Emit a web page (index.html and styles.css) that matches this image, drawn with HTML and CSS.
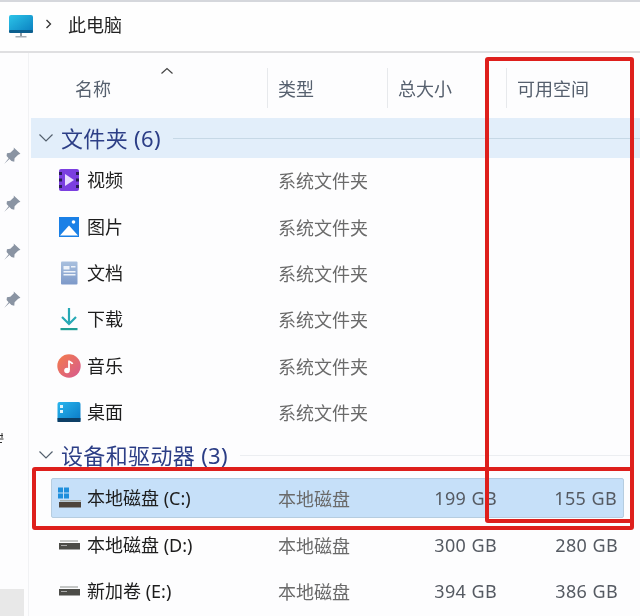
FILE: index.html
```html
<!DOCTYPE html>
<html lang="zh-CN">
<head>
<meta charset="utf-8">
<title>此电脑</title>
<link rel="stylesheet" href="styles.css">
</head>
<body>
<div class="window">
  <header class="crumbs">
    <svg class="pc-icon" width="26" height="24" viewBox="0 0 26 24"><defs><linearGradient id="pc" x1="0" y1="0" x2="1" y2="1"><stop offset="0" stop-color="#2cc4e8"/><stop offset="1" stop-color="#0a7fc0"/></linearGradient></defs><rect x="1" y="1" width="24" height="17" rx="2" fill="url(#pc)"/><rect x="1" y="16" width="24" height="3" rx="1" fill="#0c5f8e"/><rect x="12" y="19" width="2" height="4" fill="#8f9aa3"/><rect x="7.500" y="22" width="11" height="1.500" fill="#a5aeb5"/></svg>
    <svg class="sep" width="8" height="10" viewBox="0 0 8 10"><path d="M1.500 1l4 4-4 4" fill="none" stroke="#333" stroke-width="1.300"/></svg>
    <span class="crumb-text">此电脑</span>
  </header>
  <div class="body">
    <aside class="pins">
      <svg class="pin" width="18" height="18" viewBox="0 0 16 16"><path d="M9.500 0.500l6 5.500-2 .8-3.200 3.200-.3 3-2.500-.5-1.800-1.800-4.700 4.300 4-5-1.800-2 .3-2.500 3-.3 3.200-3.200z" fill="#8a94a3"/></svg>
      <svg class="pin" width="18" height="18" viewBox="0 0 16 16"><path d="M9.500 0.500l6 5.500-2 .8-3.200 3.200-.3 3-2.500-.5-1.800-1.800-4.700 4.300 4-5-1.800-2 .3-2.500 3-.3 3.200-3.200z" fill="#8a94a3"/></svg>
      <svg class="pin" width="18" height="18" viewBox="0 0 16 16"><path d="M9.500 0.500l6 5.500-2 .8-3.200 3.200-.3 3-2.500-.5-1.800-1.800-4.700 4.300 4-5-1.800-2 .3-2.500 3-.3 3.200-3.200z" fill="#8a94a3"/></svg>
      <svg class="pin" width="18" height="18" viewBox="0 0 16 16"><path d="M9.500 0.500l6 5.500-2 .8-3.200 3.200-.3 3-2.500-.5-1.800-1.800-4.700 4.300 4-5-1.800-2 .3-2.500 3-.3 3.200-3.200z" fill="#8a94a3"/></svg>
      <svg class="edge-mark" width="4" height="12" viewBox="0 0 4 12"><path d="M0 2.500h3M0 6h3.500M0 9.500h2M2 0v5" fill="none" stroke="#333" stroke-width="1"/></svg>
      <div class="nav-selected"></div>
    </aside>
    <main class="list">
      <div class="columns">
        <div class="col col-name">名称<svg class="sort" width="14" height="8" viewBox="0 0 14 8"><path d="M1.500 6.500L7 1.500l5.500 5" fill="none" stroke="#444" stroke-width="1.200"/></svg></div>
        <div class="col col-div">类型</div>
        <div class="col col-div">总大小</div>
        <div class="col col-div">可用空间</div>
      </div>

      <div class="group group-active">
        <svg width="16" height="10" viewBox="0 0 16 10"><path d="M1.500 1.500L8 8l6.500-6.500" fill="none" stroke="#54606e" stroke-width="1.200"/></svg>
        <span class="group-title">文件夹 (6)</span><span class="group-line"></span>
      </div>

      <div class="row">
        <div class="name"><svg class="ico" width="22" height="24" viewBox="0 0 22 24"><rect x="1" y="1" width="20" height="22" rx="2" fill="#7b3fe0"/><rect x="1" y="4" width="3" height="3" fill="#2a1b57"/><rect x="1" y="10.500" width="3" height="3" fill="#2a1b57"/><rect x="1" y="17" width="3" height="3" fill="#2a1b57"/><rect x="18" y="4" width="3" height="3" fill="#2a1b57"/><rect x="18" y="10.500" width="3" height="3" fill="#2a1b57"/><rect x="18" y="17" width="3" height="3" fill="#2a1b57"/><path d="M7 6l9 6-9 6z" fill="#e9dcff"/></svg><span>视频</span></div>
        <div class="type">系统文件夹</div><div></div><div></div>
      </div>
      <div class="row">
        <div class="name"><svg class="ico" width="22" height="22" viewBox="0 0 22 22"><rect x="1" y="1" width="20" height="20" fill="#1a80e6"/><path d="M2 19.500L11 9.500l9 10z" fill="#fff"/><circle cx="15.500" cy="6" r="1.800" fill="#fff"/></svg><span>图片</span></div>
        <div class="type">系统文件夹</div><div></div><div></div>
      </div>
      <div class="row">
        <div class="name"><svg class="ico" width="22" height="24" viewBox="0 0 22 24"><defs><linearGradient id="doc" x1="0" y1="0" x2="0" y2="1"><stop offset="0" stop-color="#a9c0de"/><stop offset="1" stop-color="#7d99c9"/></linearGradient></defs><rect x="3" y="0.500" width="16.500" height="23" rx="1" fill="url(#doc)"/><rect x="5.500" y="5" width="6" height="3.500" fill="#eef3fa"/><rect x="13" y="5" width="4.500" height="1.500" fill="#eef3fa"/><rect x="5.500" y="10" width="12" height="1.500" fill="#eef3fa"/><rect x="5.500" y="13" width="12" height="1.500" fill="#eef3fa"/></svg><span>文档</span></div>
        <div class="type">系统文件夹</div><div></div><div></div>
      </div>
      <div class="row">
        <div class="name"><svg class="ico" width="22" height="24" viewBox="0 0 22 24"><path d="M11 1v15M4 10l7 7 7-7" fill="none" stroke="#27a9b5" stroke-width="2.200"/><rect x="2.500" y="21" width="17" height="2.200" fill="#1f9e94"/></svg><span>下载</span></div>
        <div class="type">系统文件夹</div><div></div><div></div>
      </div>
      <div class="row">
        <div class="name"><svg class="ico" width="24" height="24" viewBox="0 0 24 24"><defs><linearGradient id="mus" x1="0" y1="0" x2="1" y2="1"><stop offset="0" stop-color="#f47c4a"/><stop offset="1" stop-color="#d65a90"/></linearGradient></defs><circle cx="12" cy="12" r="11.700" fill="url(#mus)"/><circle cx="10" cy="16.500" r="2.800" fill="#fff"/><path d="M12 16V6.500c0 1.500 3 2 3.500 3.500" fill="none" stroke="#fff" stroke-width="1.800"/></svg><span>音乐</span></div>
        <div class="type">系统文件夹</div><div></div><div></div>
      </div>
      <div class="row">
        <div class="name"><svg class="ico" width="24" height="22" viewBox="0 0 24 22"><defs><linearGradient id="desk" x1="0" y1="0" x2="1" y2="1"><stop offset="0" stop-color="#29b6ee"/><stop offset="1" stop-color="#0a78c4"/></linearGradient></defs><rect x="0.500" y="1" width="23" height="20" rx="2" fill="url(#desk)"/><rect x="0.500" y="17" width="23" height="4" fill="#0d3f66"/><rect x="3" y="4" width="3" height="3" fill="#dff4fd"/><rect x="3" y="9" width="3" height="3" fill="#dff4fd"/></svg><span>桌面</span></div>
        <div class="type">系统文件夹</div><div></div><div></div>
      </div>

      <div class="group">
        <svg width="16" height="10" viewBox="0 0 16 10"><path d="M1.500 1.500L8 8l6.500-6.500" fill="none" stroke="#54606e" stroke-width="1.200"/></svg>
        <span class="group-title">设备和驱动器 (3)</span><span class="group-line"></span>
      </div>

      <div class="row row-selected">
        <div class="name"><svg class="ico" width="24" height="22" viewBox="0 0 24 22"><rect x="1" y="0.500" width="5" height="5" fill="#1f8fdc"/><rect x="7" y="0.500" width="5" height="5" fill="#1f8fdc"/><rect x="1" y="6.500" width="5" height="5" fill="#1f8fdc"/><rect x="7" y="6.500" width="5" height="5" fill="#1f8fdc"/><rect x="3" y="13" width="21" height="1.500" fill="#a9b0ae"/><rect x="2" y="15" width="22" height="5.500" fill="#4e443b"/></svg><span>本地磁盘 (C:)</span></div>
        <div class="type">本地磁盘</div><div class="num">199 GB</div><div class="num">155 GB</div>
      </div>
      <div class="row">
        <div class="name"><svg class="ico" width="24" height="12" viewBox="0 0 24 12"><rect x="3" y="1" width="18" height="2" fill="#c5c7c6"/><rect x="2" y="4" width="21" height="6.500" fill="#4c4c48"/><rect x="4" y="6" width="6" height="1" fill="#aaa"/></svg><span>本地磁盘 (D:)</span></div>
        <div class="type">本地磁盘</div><div class="num">300 GB</div><div class="num">280 GB</div>
      </div>
      <div class="row">
        <div class="name"><svg class="ico" width="24" height="12" viewBox="0 0 24 12"><rect x="3" y="1" width="18" height="2" fill="#c5c7c6"/><rect x="2" y="4" width="21" height="6.500" fill="#4c4c48"/><rect x="4" y="6" width="6" height="1" fill="#aaa"/></svg><span>新加卷 (E:)</span></div>
        <div class="type">本地磁盘</div><div class="num">394 GB</div><div class="num">386 GB</div>
      </div>
    </main>
  </div>
  <div class="mark mark-col"></div>
  <div class="mark mark-row"></div>
</div>
</body>
</html>
```
FILE: styles.css
```css
* { box-sizing: border-box; }
html, body { margin: 0; padding: 0; }
body {
  font-family: "Noto Sans", "Noto Sans CJK SC", sans-serif;
  background: #fdfdfe;
  color: #1c1c1c;
}
.window {
  position: relative;
  width: 640px;
  height: 616px;
  overflow: hidden;
  border-top: 2px solid #d5d7dc;
  filter: blur(0.35px);
}
.crumbs {
  height: 51px;
  display: flex;
  align-items: center;
  padding: 0 0 6px 8px;
  border-bottom: 2px solid #dfdfe1;
  background: #fefefe;
}
.pc-icon { margin-right: 11px; margin-top: 4px; }
.sep { margin-right: 15px; }
.crumb-text { font-size: 18px; line-height: 24px; color: #222; font-family: "Noto Sans CJK SC", sans-serif; }

.body { display: flex; height: 563px; }
.pins {
  position: relative;
  width: 29px;
  flex: none;
  border-right: 1px solid #f1f2f4;
  display: flex;
  flex-direction: column;
  align-items: center;
  padding: 94px 5px 0 0;
  gap: 30px;
}
.pin { display: block; }
.edge-mark {
  position: absolute;
  left: 0;
  top: 380px;
}
.nav-selected {
  position: absolute;
  left: 0;
  bottom: 0;
  width: 24px;
  height: 27px;
  background: #e8e8e8;
}

.list { flex: 1; min-width: 0; padding-left: 2px; font-family: "Noto Sans CJK SC", sans-serif; }
.columns, .row {
  display: grid;
  grid-template-columns: 236px 120px 119px 1fr;
}
.columns { height: 65px; padding-top: 15px; }
.col {
  position: relative;
  height: 40px;
  font-size: 18px;
  line-height: 40px;
  color: #56606e;
  padding-left: 10px;
}
.col-name { padding-left: 44px; }
.col-div { border-left: 1px solid #e7e9ec; }
.sort { position: absolute; left: 129px; top: -1px; }

.group {
  height: 40px;
  display: flex;
  align-items: center;
  padding-left: 7px;
  margin-bottom: -1px;
}
.group-active { background: #e2eefa; }
.group svg { flex: none; }
.group-title {
  margin-left: 7px;
  font-size: 22px;
  line-height: 30px;
  letter-spacing: 0.35px;
  color: #2c3e86;
  font-family: "Noto Sans", "Noto Sans CJK SC", sans-serif;
  white-space: nowrap;
}
.group-line {
  flex: 1;
  height: 1px;
  margin-left: 12px;
  margin-right: 6px;
  background: #eceef1;
}
.group-active .group-line { background: #c6d8e6; margin-right: 0; }

.row {
  height: 46.4px;
  align-items: center;
  font-size: 18px;
  line-height: 24px;
  color: #1d1d1d;
}
.name {
  display: grid;
  grid-template-columns: 26px 1fr;
  column-gap: 5px;
  align-items: center;
  padding-left: 25px;
  white-space: nowrap;
  font-family: "Noto Sans", "Noto Sans CJK SC", sans-serif;
}
.ico { justify-self: center; }
.type { color: #6a6a6a; padding-left: 11px; font-size: 18px; }
.num {
  text-align: right;
  color: #555a62;
  font-family: "Noto Sans", sans-serif;
  letter-spacing: 0.4px;
}
.type + .num { padding-right: 9px; }
.num + .num { padding-right: 22px; }
.row-selected {
  height: 40px;
  margin: 3.600px 16px 3.800px 20px;
  grid-template-columns: 216px 120px 119px 1fr;
  background: #c6e0f9;
  border: 1px solid #b6cde0;
  border-radius: 2px;
}
.row-selected .name { padding-left: 4px; }
.row-selected .type { padding-left: 10px; }
.row-selected .type + .num { padding-right: 10px; }
.row-selected .num + .num { padding-right: 6px; }

.mark {
  position: absolute;
  border: 4px solid #de1f1c;
  border-radius: 3px;
  pointer-events: none;
}
.mark-col { left: 485px; top: 55px; width: 149px; height: 466px; }
.mark-row { left: 32px; top: 465px; width: 602px; height: 63px; }
```
